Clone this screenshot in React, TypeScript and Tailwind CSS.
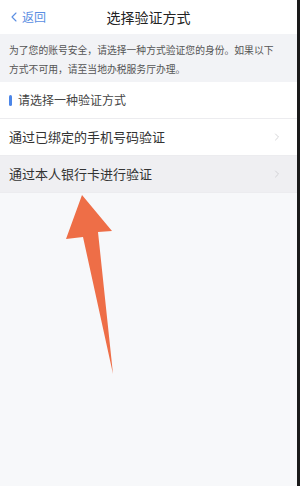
import { ChevronLeft, ChevronRight } from "lucide-react";

const font = { fontFamily: '"Noto Sans CJK SC", "Noto Sans", sans-serif' };

function Row({ label, active }: { label: string; active?: boolean }) {
  return (
    <div
      className={`flex h-[37px] items-center justify-between pl-[9px] pr-[14px] border-b border-[#ececef] ${
        active ? "bg-[#efeff2]" : "bg-white"
      }`}
    >
      <span className="text-[13px] text-[#333]">{label}</span>
      <ChevronRight size={12} strokeWidth={1.6} className="text-[#c9c9cd]" />
    </div>
  );
}

export default function App() {
  return (
    <div className="flex h-[486px] w-[300px] overflow-hidden" style={font}>
      <div className="relative flex flex-1 flex-col bg-[#f7f8fa]">
        <div className="relative flex h-[34px] items-center justify-center bg-white">
          <div className="absolute left-[6px] top-0 flex h-full items-center text-[#5a8ee2]">
            <ChevronLeft size={16} strokeWidth={1.6} />
            <span className="text-[12px]">返回</span>
          </div>
          <span className="text-[14px] text-[#222]">选择验证方式</span>
        </div>
        <div className="h-[48px] bg-[#f2f3f6] pl-[9px] pt-[7px] text-[9.8px] leading-[19px] text-[#555]">
          为了您的账号安全，请选择一种方式验证您的身份。如果以下
          <br />
          方式不可用，请至当地办税服务厅办理。
        </div>
        <div className="flex h-[37px] items-center gap-[6px] border-b border-[#ececef] bg-white pl-[9px]">
          <div className="h-[11px] w-[3px] rounded-full bg-[#4c86e8]" />
          <span className="text-[12px] text-[#444]">请选择一种验证方式</span>
        </div>
        <Row label="通过已绑定的手机号码验证" />
        <Row label="通过本人银行卡进行验证" active />
        <svg
          className="absolute left-0 top-0"
          width="297"
          height="486"
          viewBox="0 0 297 486"
        >
          <path
            d="M82 195 L112 231 L98 232 L113 374 L83 237 L66 239 Z"
            fill="#ee6e47"
          />
        </svg>
      </div>
      <div className="h-full w-[3px] bg-[#1a1a1a]" />
    </div>
  );
}
